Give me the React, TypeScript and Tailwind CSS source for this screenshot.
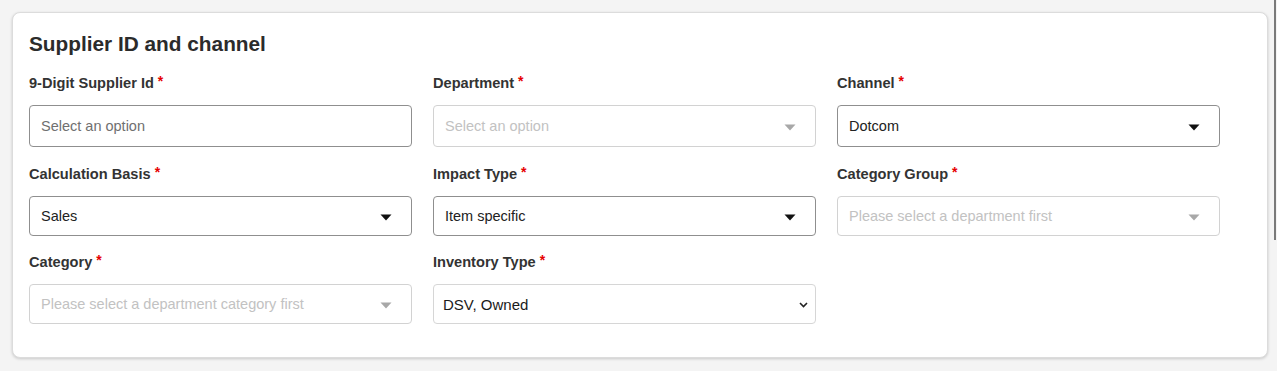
import React from "react";

const Tri = ({ color }: { color: string }) => (
  <svg width="12" height="7" viewBox="0 0 12 7" className="shrink-0">
    <path d="M0.5 0.5 L11.5 0.5 L6 6.5 Z" fill={color} />
  </svg>
);

const Chevron = () => (
  <svg width="9" height="6" viewBox="0 0 9 6" className="shrink-0">
    <path d="M1 1 L4.5 4.5 L8 1" fill="none" stroke="#222" strokeWidth="1.6" />
  </svg>
);

const Label = ({ text }: { text: string }) => (
  <div className="flex h-5 items-center text-[14.6px] font-bold leading-5 text-[#333]">
    <span>{text}</span>
    <span className="ml-[4px] -mt-[4px] text-[14px] text-[#e60000]">*</span>
  </div>
);

type FieldProps = {
  label: string;
  value: string;
  kind: "placeholder" | "disabled" | "active" | "native";
  h: string;
};

const Field = ({ label, value, kind, h }: FieldProps) => {
  const box =
    kind === "active"
      ? "border-[#8f8f8f] text-[#222] pl-[11px] pr-[19px] text-[14.5px]"
      : kind === "placeholder"
      ? "border-[#8f8f8f] text-[#707070] pl-[11px] pr-[19px] text-[14.5px]"
      : kind === "disabled"
      ? "border-[#d2d2d2] text-[#c2c2c2] pl-[11px] pr-[19px] text-[14.5px]"
      : "border-[#d6d6d6] text-[#1a1a1a] pl-[9px] pr-[7px] text-[15px]";
  return (
    <div className="flex flex-col">
      <Label text={label} />
      <div
        className={`mt-3 flex items-center justify-between rounded-[4px] border bg-white pt-[2px] ${h} ${box}`}
      >
        <span>{value}</span>
        {kind === "active" && <Tri color="#111" />}
        {kind === "disabled" && <Tri color="#a8a8a8" />}
        {kind === "native" && <Chevron />}
      </div>
    </div>
  );
};

export default function App() {
  return (
    <div
      className="relative h-[371px] w-[1277px] overflow-hidden bg-[#f4f4f4] pt-3 pl-3"
      style={{ fontFamily: '"Liberation Sans", Arial, sans-serif' }}
    >
      <div className="h-[346px] w-[1256px] rounded-[8px] border border-[#dcdcdc] bg-white pl-[16px] pt-[17px] shadow-[0_1px_3px_rgba(0,0,0,0.18)]">
        <h2 className="h-7 text-[20.8px] font-bold leading-7 text-[#2b2b2b]">
          Supplier ID and channel
        </h2>
        <div className="mt-[15px] grid w-[1191px] grid-cols-3 gap-x-[21px]">
          <Field label="9-Digit Supplier Id" value="Select an option" kind="placeholder" h="h-[42px]" />
          <Field label="Department" value="Select an option" kind="disabled" h="h-[42px]" />
          <Field label="Channel" value="Dotcom" kind="active" h="h-[42px]" />
        </div>
        <div className="mt-[17px] grid w-[1191px] grid-cols-3 gap-x-[21px]">
          <Field label="Calculation Basis" value="Sales" kind="active" h="h-[40px]" />
          <Field label="Impact Type" value="Item specific" kind="active" h="h-[40px]" />
          <Field label="Category Group" value="Please select a department first" kind="disabled" h="h-[40px]" />
        </div>
        <div className="mt-4 grid w-[1191px] grid-cols-3 gap-x-[21px]">
          <Field label="Category" value="Please select a department category first" kind="disabled" h="h-[40px]" />
          <Field label="Inventory Type" value="DSV, Owned" kind="native" h="h-[40px]" />
        </div>
      </div>
      <div className="absolute left-[1274px] top-0 h-[240px] w-[2px] bg-[#7a7a7a]" />
    </div>
  );
}
